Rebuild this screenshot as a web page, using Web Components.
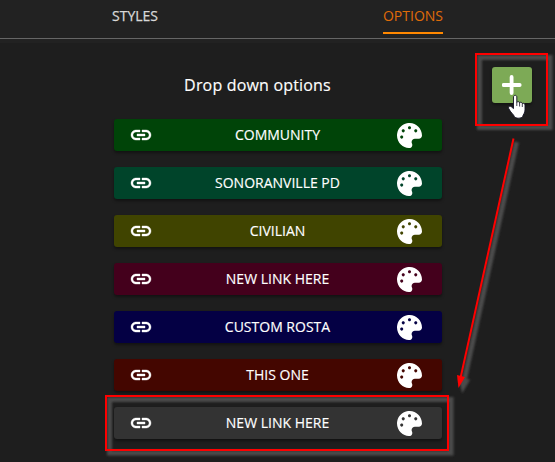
<!DOCTYPE html>
<html lang="en">
<head>
<meta charset="utf-8">
<title>Drop down options</title>
<style>
html,body{margin:0;height:100%;overflow:hidden;background:#1e1e1e}
body{font-family:"Open Sans","Noto Sans",sans-serif;color:#fff}
</style>
</head>
<body>
<options-panel></options-panel>
<script>
const define = (name, html) => customElements.define(name, class extends HTMLElement {
  constructor() {
    super();
    this.attachShadow({mode: 'open'}).innerHTML = html;
  }
});

define('tab-item', `<style>
:host{display:flex;justify-content:center}
span{box-sizing:border-box;height:34px;padding-top:6px;font-size:14px;line-height:20px;color:#d8d8d8;-webkit-text-stroke:.25px}
:host([active]) span{color:#e06c08;border-bottom:2px solid #ff8800;-webkit-text-stroke:0}
</style><span><slot></slot></span>`);

define('tab-bar', `<style>
:host{display:block;height:43px;background:#222}
div{display:grid;grid-template-columns:270px 286px;height:38px;border-bottom:1px solid #666}
</style><div><slot></slot></div>`);

define('link-row', `<style>
:host{display:grid;grid-template-columns:54px 1fr 54px;align-items:center;height:32px;border-radius:3px;background:var(--fill);box-shadow:0 2px 3px #0006;font-size:14px;line-height:20px;text-align:center;-webkit-text-stroke:.15px}
svg{display:block;fill:#fff}
.link{width:24px;height:24px;margin-left:15px;stroke:#fff;stroke-width:.4}
.palette{width:25px;height:25px;margin-left:9px}
slot{display:block;margin-left:-1px}
</style>
<svg class="link" viewBox="0 0 24 24"><path d="M3.900 12c0-1.710 1.390-3.100 3.100-3.100h4V7H7c-2.760 0-5 2.240-5 5s2.240 5 5 5h4v-1.900H7c-1.710 0-3.100-1.390-3.100-3.100zM8 13h8v-2H8v2zm9-6h-4v1.900h4c1.710 0 3.100 1.390 3.100 3.100s-1.390 3.100-3.100 3.100h-4V17h4c2.760 0 5-2.240 5-5s-2.240-5-5-5z"/></svg>
<div><slot></slot></div>
<svg class="palette" viewBox="0 0 512 512"><path d="M204.300 5C104.900 24.400 24.800 104.300 5.200 203.400c-37 187 131.700 326.400 258.800 306.700 41.200-6.400 61.400-54.600 42.500-91.700-23.100-45.400 9.900-98.400 60.900-98.400h79.700c35.800 0 64.800-29.600 64.900-65.300C511.500 97.100 368.100-26.900 204.300 5zM96 320c-17.700 0-32-14.300-32-32s14.300-32 32-32 32 14.300 32 32-14.300 32-32 32zm32-128c-17.700 0-32-14.300-32-32s14.300-32 32-32 32 14.300 32 32-14.300 32-32 32zm128-64c-17.700 0-32-14.300-32-32s14.300-32 32-32 32 14.300 32 32-14.300 32-32 32zm128 64c-17.700 0-32-14.300-32-32s14.300-32 32-32 32 14.300 32 32-14.300 32-32 32z"/></svg>`);

define('add-button', `<style>
:host{display:grid;place-items:center;width:40px;height:36px;border-radius:3px;background:#7daa56;box-shadow:0 2px 3px #0006}
svg{display:block;width:20px;height:20px;stroke:#fff;stroke-width:3.800;stroke-linecap:round}
</style><svg viewBox="0 0 20 20"><path d="M9.600 1.900v16.200M1.500 10h16.200"/></svg>`);

define('callout-layer', `<style>
:host{position:absolute;inset:0;pointer-events:none}
svg{display:block}
</style>
<svg width="555" height="462" viewBox="0 0 555 462">
<defs><filter id="soft" x="-5%" y="-5%" width="110%" height="110%"><feGaussianBlur stdDeviation=".8"/></filter></defs>
<g fill="none" stroke="#4b4b4b" filter="url(#soft)">
<rect x="479.500" y="57.500" width="70.500" height="70" stroke-width="5"/>
<rect x="109.500" y="399.500" width="341.500" height="53.500" stroke-width="5"/>
<path d="M516.500 142L463 386" stroke-width="5"/>
<path d="M461 380l6 1-4 7z" fill="#4b4b4b" stroke-width="4"/>
</g>
<g fill="none" stroke="#f00" stroke-width="2">
<rect x="476" y="54" width="71" height="71"/>
<rect x="106" y="396" width="342" height="54"/>
<path d="M513.500 138.500L460.500 378"/>
</g>
<path d="M457 375l8 2-6.500 11z" fill="#f00"/>
<path d="M513.500 97c0-2.200 3.300-2.200 3.300 0v5.500c.6-1.400 2.800-1 2.800.4.800-1.200 2.700-.6 2.700.8.900-1 2.700-.3 2.700 1.200v5c0 3-1.800 4.500-2.300 6.500-1 2.300-7 2.300-8.200.3-1-2.500-4-4.200-5.800-8.200-.8-2.300 1.500-3 2.700-1.700l2.100 1.800z" fill="#fff" stroke="#112" stroke-width=".9"/>
<path d="M519.600 103v3.500M522.300 104v3M516.800 102.500v3.500" stroke="#112" stroke-width=".8"/>
</svg>`);

define('options-panel', `<style>
:host{display:block;position:relative;width:555px;height:462px;overflow:hidden}
main{display:grid;grid-template-columns:114px 328px 1fr;padding-top:24px}
section{grid-column:2;display:flex;flex-direction:column;gap:16px}
h1{margin:0 41px -1px 0;padding-top:6px;height:31px;font:400 16px/24px "Open Sans","Noto Sans",sans-serif;letter-spacing:.18px;text-align:center;-webkit-text-stroke:.15px}
add-button{margin-left:50px}
</style>
<tab-bar><tab-item>STYLES</tab-item><tab-item active>OPTIONS</tab-item></tab-bar>
<main><section><h1>Drop down options</h1>
<link-row style="--fill:#004408">COMMUNITY</link-row>
<link-row style="--fill:#00442a">SONORANVILLE PD</link-row>
<link-row style="--fill:#404400">CIVILIAN</link-row>
<link-row style="--fill:#44001c">NEW LINK HERE</link-row>
<link-row style="--fill:#040044">CUSTOM ROSTA</link-row>
<link-row style="--fill:#440600">THIS ONE</link-row>
<link-row style="--fill:#333">NEW LINK HERE</link-row>
</section><add-button></add-button></main>
<callout-layer></callout-layer>`);
</script>
</body>
</html>
